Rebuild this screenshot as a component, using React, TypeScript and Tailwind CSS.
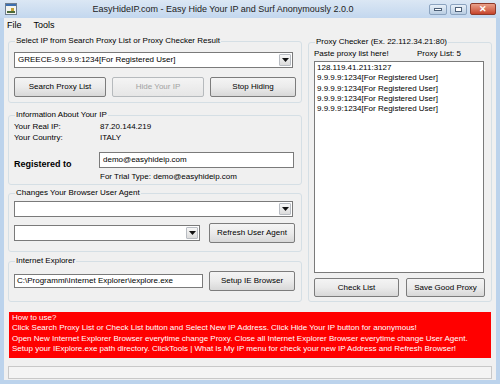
import React from 'react'

const font = { fontFamily: '"Liberation Sans", Arial, sans-serif' }

const Arrow = () => (
    <div className="flex h-full w-[12px] items-center justify-center rounded-[1px] border border-[#b8bcc2] bg-gradient-to-b from-[#f7f7f7] to-[#dcdcdc]">
        <svg width="7" height="4" viewBox="0 0 7 4"><path d="M0 0h7L3.5 4z" fill="#111" /></svg>
    </div>
)

const Combo = ({ value, className }: { value?: string; className: string }) => (
    <div className={`flex items-center border border-[#7a7a7a] bg-white pl-[3px] pr-[1px] py-[1px] ${className}`}>
        <span className="flex-1 truncate text-[8px] leading-none text-black">{value}</span>
        <Arrow />
    </div>
)

const Btn = ({ label, className, disabled }: { label: string; className: string; disabled?: boolean }) => (
    <button
        className={`flex items-center justify-center rounded-[2px] border bg-gradient-to-b text-[8px] leading-none ${disabled ? 'border-[#b6babd] from-[#f4f4f4] to-[#e6e6e6] text-[#a2a2a2]' : 'border-[#7c7c7c] from-[#f4f4f4] via-[#ebebeb] to-[#d8d8d8] text-black'} ${className}`}
    >
        {label}
    </button>
)

const Group = ({ title, className, children }: { title: string; className: string; children: React.ReactNode }) => (
    <fieldset className={`rounded-[3px] border border-[#d5dfe5] px-[5px] ${className}`}>
        <legend className="ml-[1px] h-[10px] px-[1px] text-[8px] leading-[10px] text-black">{title}</legend>
        {children}
    </fieldset>
)

export default function App() {
    return (
        <div style={font} className="flex h-[384px] w-[500px] flex-col overflow-hidden bg-[#bcd3ec] text-black">
            {/* title bar */}
            <div className="flex h-[18px] items-center bg-gradient-to-b from-[#dbe7f4] to-[#c3d7ee] pl-[5px] pr-[4px]">
                <svg width="12" height="12" viewBox="0 0 12 12">
                    <rect x="0.5" y="0.5" width="11" height="11" fill="#f4f4ee" stroke="#6f7f90" />
                    <rect x="1" y="1" width="10" height="2" fill="#3c6fb0" />
                    <rect x="6" y="5" width="3" height="3" fill="#c2a23a" />
                    <rect x="2" y="8" width="8" height="2" fill="#4a6a3a" />
                </svg>
                <div className="flex-1 text-center text-[9px] leading-none text-[#222]">
                    EasyHideIP.com - Easy Hide Your IP and Surf Anonymously 2.0.0
                </div>
                <div className="flex items-center gap-[3px]">
                    <div className="flex h-[11px] w-[18px] items-center justify-center rounded-[2px] border border-[#8ba3bf] bg-gradient-to-b from-[#e8f0f8] to-[#b9cde2]">
                        <div className="h-[3px] w-[8px] border border-[#4e6178] bg-white" />
                    </div>
                    <div className="flex h-[11px] w-[17px] items-center justify-center rounded-[2px] border border-[#8ba3bf] bg-gradient-to-b from-[#e8f0f8] to-[#b9cde2]">
                        <div className="h-[5px] w-[7px] border border-[#4e6178] bg-white" />
                    </div>
                    <div className="flex h-[12px] w-[26px] items-center justify-center rounded-[2px] border border-[#8d3a2a] bg-gradient-to-b from-[#e9a08a] to-[#c5432b] text-[9px] font-bold leading-none text-white">
                        ✕
                    </div>
                </div>
            </div>

            {/* client */}
            <div className="mx-[4px] flex h-[362px] flex-col bg-[#f0f0f0]">
                {/* menu */}
                <div className="flex h-[14px] items-center gap-[12px] pl-[3px] text-[9px] leading-none">
                    <span>File</span>
                    <span>Tools</span>
                </div>

                <div className="flex gap-[6px] px-[4px] pt-[4px]">
                    {/* left column */}
                    <div className="flex w-[294px] flex-col">
                        <Group title="Select IP from Search Proxy List or Proxy Checker Result" className="h-[67px]">
                            <Combo value="GREECE-9.9.9.9:1234[For Registered User]" className="mt-[6px] h-[16px] w-[279px]" />
                            <div className="mt-[9px] flex gap-[6px]">
                                <Btn label="Search Proxy List" className="h-[20px] w-[92px]" />
                                <Btn label="Hide Your IP" className="h-[20px] w-[92px]" disabled />
                                <Btn label="Stop Hiding" className="h-[20px] w-[86px]" />
                            </div>
                        </Group>

                        <Group title="Information About Your IP" className="mt-[7px] h-[75px]">
                            <div className="mt-[1px] flex h-[11px] items-center text-[8px] leading-none">
                                <span className="w-[86px]">Your Real IP:</span>
                                <span>87.20.144.219</span>
                            </div>
                            <div className="flex h-[11px] items-center text-[8px] leading-none">
                                <span className="w-[86px]">Your Country:</span>
                                <span>ITALY</span>
                            </div>
                            <div className="mt-[8px] flex items-center">
                                <span className="w-[85px] pt-[9px] text-[9px] font-bold leading-none">Registered to</span>
                                <div className="flex h-[16px] w-[195px] items-center border border-[#7a7a7a] bg-white pl-[3px] text-[8px] leading-none">
                                    demo@easyhideip.com
                                </div>
                            </div>
                            <div className="mt-[3px] pl-[86px] text-[8px] leading-[10px]">
                                For Trial Type: demo@easyhideip.com
                            </div>
                        </Group>

                        <Group title="Changes Your Browser User Agent" className="mt-[3px] h-[64px]">
                            <Combo className="mt-[3px] h-[16px] w-[279px]" />
                            <div className="mt-[6px] flex items-center gap-[9px]">
                                <Combo className="h-[16px] w-[186px]" />
                                <Btn label="Refresh User Agent" className="h-[20px] w-[86px]" />
                            </div>
                        </Group>

                        <Group title="Internet Explorer" className="mt-[4px] h-[46px]">
                            <div className="mt-[5px] flex items-center gap-[6px]">
                                <div className="flex h-[14px] w-[189px] items-center border border-[#7a7a7a] bg-white pl-[2px] text-[8px] leading-none">
                                    C:\Programmi\Internet Explorer\iexplore.exe
                                </div>
                                <Btn label="Setup IE Browser" className="h-[20px] w-[86px]" />
                            </div>
                        </Group>
                    </div>

                    {/* right column */}
                    <Group title="Proxy Checker (Ex. 22.112.34.21:80)" className="mt-[1px] h-[265px] w-[185px]">
                        <div className="mt-[2px] flex h-[10px] items-center text-[8px] leading-none">
                            <span className="w-[103px]">Paste proxy list here!</span>
                            <span>Proxy List: 5</span>
                        </div>
                        <div className="mt-[2px] h-[212px] w-[170px] border border-[#7a7a7a] bg-white px-[2px] pt-[1px] text-[8px] leading-[10.3px]">
                            <div>128.119.41.211:3127</div>
                            <div>9.9.9.9:1234[For Registered User]</div>
                            <div>9.9.9.9:1234[For Registered User]</div>
                            <div>9.9.9.9:1234[For Registered User]</div>
                            <div>9.9.9.9:1234[For Registered User]</div>
                        </div>
                        <div className="mt-[5px] flex gap-[7px]">
                            <Btn label="Check List" className="h-[19px] w-[85px]" />
                            <Btn label="Save Good Proxy" className="h-[19px] w-[79px]" />
                        </div>
                    </Group>
                </div>

                {/* how to use */}
                <div className="mx-[5px] mt-[10px] h-[46px] bg-[#ff0000] pl-[3px] pt-[1px] text-[8px] leading-[10.3px] text-white">
                    <div>How to use?</div>
                    <div>Click Search Proxy List or Check List button and Select New IP Address. Click Hide Your IP button for anonymous!</div>
                    <div>Open New Internet Explorer Browser everytime change Proxy. Close all Internet Explorer Browser everytime change User Agent.</div>
                    <div>Setup your IExplore.exe path directory. ClickTools | What Is My IP menu for check your new IP Address and Refresh Browser!</div>
                </div>

                {/* status */}
                <div className="mx-[4px] mt-[8px] h-[13px] border border-[#c8c8c8] bg-[#f4f4f4]" />
            </div>
        </div>
    )
}
